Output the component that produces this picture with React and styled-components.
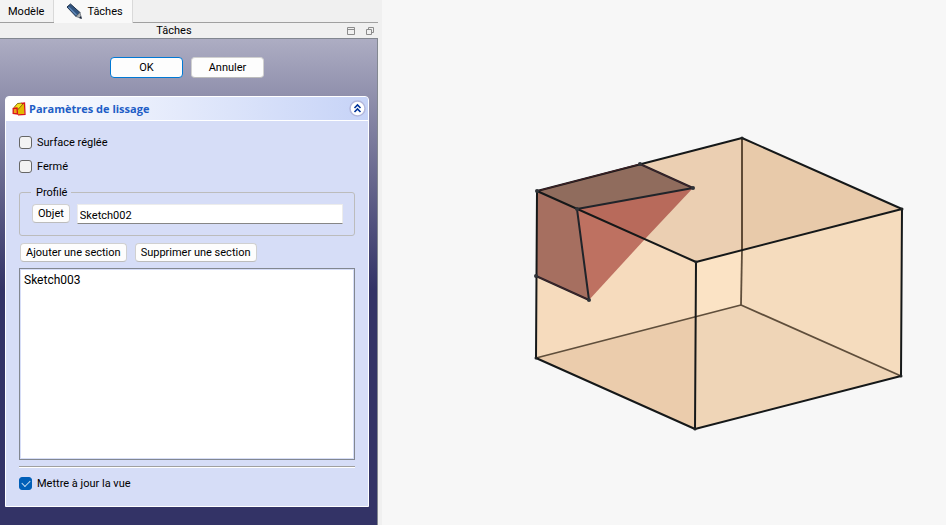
import { useState } from "react";
import styled, { createGlobalStyle } from "styled-components";

const GlobalStyle = createGlobalStyle`
  * {
    box-sizing: border-box;
  }

  body {
    margin: 0;
    background: #f7f7f7;
    color: #000;
    font-family: Roboto, "Open Sans", sans-serif;
    font-size: 11px;
    line-height: 16px;
  }

  button,
  input {
    color: inherit;
    font: inherit;
  }
`;

const Window = styled.div`
  display: grid;
  grid-template-columns: minmax(320px, 382fr) 564fr;
  min-height: 100vh;
`;

const Dock = styled.aside`
  display: flex;
  flex-direction: column;
  padding-right: 4px;
  background: #f0f0f0;
`;

const TabBar = styled.div`
  display: flex;
  height: 23px;
  box-shadow: inset 0 -1px #a0a0a0;
`;

const Tab = styled.button`
  display: flex;
  align-items: center;
  gap: 4px;
  height: ${(props) => (props.$active ? "23px" : "22px")};
  padding: ${(props) => (props.$active ? "0 9px 0 12px" : "2px 9px 0 8px")};
  border: 0;
  border-right: 1px solid #d9d9d9;
  background: ${(props) => (props.$active ? "#f9f9f9" : "#f3f3f3")};
`;

const DockTitle = styled.div`
  display: flex;
  align-items: center;
  height: 16px;
  padding: 0 4px 0 12px;
  border-bottom: 1px solid #828790;

  h1 {
    flex: 1;
    margin: 0;
    font-size: 11px;
    font-weight: 400;
    line-height: 16px;
    text-align: center;
  }
`;

const TitleButton = styled.button`
  display: flex;
  margin-left: 11px;
  padding: 0;
  border: 0;
  background: none;
`;

const TaskArea = styled.div`
  flex: 1;
  padding: 18px 8px 18px 5px;
  border-right: 1px solid #828790;
  background: linear-gradient(#adadc3, #8e8eab 60px, #333366 250px);
`;

const DialogButtons = styled.div`
  display: flex;
  justify-content: center;
  gap: 8px;
  margin-bottom: 18px;
`;

const Button = styled.button`
  padding: 0 5px;
  height: 19px;
  border: 1px solid #d0d0d0;
  border-bottom-color: #bcbcbc;
  border-radius: 4px;
  background: #fdfdfd;
  line-height: 16px;
  white-space: nowrap;
`;

const DialogButton = styled(Button)`
  width: 73px;
  height: 21px;
  padding: 1px 5px 0;
  ${(props) => props.$primary && "border-color: #0078d4;"}
`;

const Panel = styled.section`
  border: 1px solid #fff;
  border-radius: 4px 4px 0 0;
  background: #d6ddf7;
`;

const PanelHeader = styled.header`
  display: flex;
  align-items: center;
  gap: 3px;
  height: 24px;
  padding: 0 2px 0 6px;
  border-bottom: 1px solid #fff;
  border-radius: 3px 3px 0 0;
  background: linear-gradient(to right, #fff, #c6d3f7);

  h2 {
    flex: 1;
    margin: 0;
    color: #215dc6;
    font-family: "Open Sans", sans-serif;
    font-size: 11px;
    font-weight: 700;
  }
`;

const CollapseButton = styled.button`
  display: flex;
  padding: 0;
  border: 0;
  background: none;
`;

const PanelBody = styled.div`
  padding: 14px 13px;
`;

const CheckLabel = styled.label`
  display: flex;
  align-items: center;
  gap: 5px;
  width: fit-content;
  height: 16px;
`;

const Options = styled.div`
  display: grid;
  gap: 8px;
  margin-bottom: 9px;
`;

const CheckBox = styled.input.attrs({ type: "checkbox" })`
  display: grid;
  place-items: center;
  width: 13px;
  height: 13px;
  margin: 0 0 1px;
  appearance: none;
  border: 1px solid #666;
  border-radius: 3px;
  background: #f3f3f3;

  &:checked {
    border-color: #005fb8;
    background: #005fb8;
  }

  &:checked::after {
    content: "";
    width: 7px;
    height: 4px;
    border: solid #c5ddf3;
    border-width: 0 0 1px 1px;
    transform: translateY(-1px) rotate(-45deg);
  }
`;

const Profile = styled.fieldset`
  display: flex;
  gap: 7px;
  min-width: 0;
  margin: 0 0 7px;
  padding: 3px 11px 11px 12px;
  border: 1px solid #bcbcbc;
  border-radius: 3px;

  legend {
    margin-left: -1px;
    padding: 1px 4px 0 5px;
  }
`;

const ProfileInput = styled.input`
  flex: 1;
  min-width: 0;
  height: 20px;
  padding: 2px 2px 0;
  border: 1px solid #ececec;
  border-bottom-color: #868686;
  background: #fff;
`;

const SectionButtons = styled.div`
  display: flex;
  gap: 8px;
  margin: 0 1px 6px;
`;

const SectionList = styled.ul`
  height: 192px;
  margin: 0 0 6px;
  padding: 3px 4px;
  border: 1px solid #828790;
  box-shadow: inset 0 0 0 1px #d6ddf7;
  background: #fff;
  font-size: 12px;
  list-style: none;
`;

const Separator = styled.hr`
  margin: 0 0 8px;
  border: 0;
  border-top: 1px solid #a0a0a0;
  border-bottom: 1px solid #fff;
`;

const Viewport = styled.main`
  display: flex;
  min-width: 0;
  background: #f7f7f7;

  svg {
    width: 100%;
    height: auto;
    align-self: flex-start;
  }
`;

const PencilIcon = () => (
  <svg width="17" height="17" viewBox="0 0 17 17" aria-hidden="true">
    <path d="M1 4 4.5 1 14 9.5 10 13.5Z" fill="#31547f" stroke="#20334d" />
    <path d="M2.5 4 10.5 12" stroke="#5f89b8" strokeWidth="1.5" />
    <path d="M10 13.5 14 9.5 15.5 15.5Z" fill="#aeb3b5" stroke="#4e5661" strokeWidth=".6" />
    <path d="m13 15 2-2 .7 2.7Z" fill="#172238" />
  </svg>
);

const LoftIcon = () => (
  <svg width="14" height="14" viewBox="0 0 14 14" aria-hidden="true">
    <path d="M1.5 6 5.5 1.5 12 1l.5 11-7 .5Z" fill="#e2b900" />
    <path d="M2 5.500 5.500 1.500 12 1 7 6Z" fill="#f5df1c" />
    <path d="M2 5.5 5.5 1.5 10 1M5.5 8 11 2" fill="none" stroke="#6b560c" strokeWidth=".8" />
    <path d="M9.5 1.5 12.500 1l.5 11.500-7 .3" fill="none" stroke="#d9141b" strokeWidth="1.3" />
    <path d="M1.2 6.500 5 6l.5 6-4.3-.5Z" fill="#eda018" stroke="#d9141b" strokeWidth="1.3" />
  </svg>
);

const DockIcon = () => (
  <svg width="8" height="8" viewBox="0 0 8 8" fill="none" stroke="#8c8c8c" aria-hidden="true">
    <path d="M.5.5h7v7h-7ZM.5 2.5h7" />
  </svg>
);

const FloatIcon = () => (
  <svg width="8" height="8" viewBox="0 0 8 8" fill="none" stroke="#8c8c8c" aria-hidden="true">
    <path d="M.5 2.5h5v5h-5ZM2.5 2V.5h5v5H6" />
  </svg>
);

const CollapseIcon = () => (
  <svg width="17" height="17" viewBox="0 0 17 17" aria-hidden="true">
    <circle cx="8.5" cy="8.5" r="7.5" fill="#fff" stroke="#b3b8dc" strokeWidth="1.5" />
    <path
      d="m5.5 8 3-3 3 3M5.5 12l3-3 3 3"
      fill="none"
      stroke="#003399"
      strokeWidth="1.6"
    />
  </svg>
);

const faces = [
  // top
  ["742,138 742,250 696,262 537,191", "#ebcfb2"],
  ["742,138 902,209 742,250", "#e8caaa"],
  // sides
  ["537,191 696,262 695,317 536,358", "#f6dbbd"],
  ["696,262 742,250 741,305 695,317", "#fbe3c5"],
  ["742,250 902,209 901,376 741,305", "#f5dcbe"],
  // bottom
  ["536,358 695,317 695,429", "#ebccac"],
  ["695,317 741,305 901,376 695,429", "#efd5b7"],
  // loft
  ["537,191 640,164 693,188 577,209", "#906c5d"],
  ["537,191 577,209 589,300 536,276", "#a66f60"],
  ["577,209 693,188 645,239", "#b86a5b"],
  ["577,209 645,239 589,300", "#be7161"],
];

const vertices = [
  [537, 191],
  [640, 164],
  [693, 188],
  [577, 209],
  [589, 300],
  [536, 276],
];

const corners = [
  [742, 138],
  [902, 209],
  [696, 262],
  [536, 358],
  [695, 429],
  [901, 376],
];

const Model = () => (
  <svg viewBox="382 0 564 525" role="img" aria-label="Sketch003">
    {faces.map(([points, color]) => (
      <polygon key={points} points={points} fill={color} />
    ))}
    <g fill="none" strokeWidth="1.8" strokeLinejoin="round">
      <path d="M742 250 741 305" stroke="#5f4e3b" />
      <path d="M742 138 742 250" stroke="#503c29" />
      <path d="M536 358 741 305 901 376" stroke="#5f4e3b" />
      <path
        d="M537 191 742 138 902 209 901 376 695 429 536 358ZM537 191 696 262 902 209M696 262 695 429"
        stroke="#151819"
        strokeWidth="2"
      />
      <path d="M640 164 693 188 577 209 589 300 536 276" stroke="#20242a" strokeWidth="2" />
      <path d="M537 191 640 164 693 188M536 276 589 300" stroke="#442126" strokeWidth="1" />
    </g>
    {vertices.map(([x, y]) => (
      <circle key={`${x}-${y}`} cx={x} cy={y} r="2" fill="#303338" />
    ))}
    {corners.map(([x, y]) => (
      <circle key={`${x}-${y}`} cx={x} cy={y} r="1.5" fill="#202324" />
    ))}
  </svg>
);

function App() {
  const [tab, setTab] = useState("tasks");
  const [profile, setProfile] = useState("Sketch002");
  const [options, setOptions] = useState({
    ruled: false,
    closed: false,
    update: true,
  });

  const toggle = (name) => {
    setOptions({ ...options, [name]: !options[name] });
  };

  return (
    <Window>
      <GlobalStyle />
      <Dock>
        <TabBar role="tablist">
          <Tab
            role="tab"
            aria-selected={tab === "model"}
            $active={tab === "model"}
            onClick={() => setTab("model")}
          >
            Modèle
          </Tab>
          <Tab
            role="tab"
            aria-selected={tab === "tasks"}
            $active={tab === "tasks"}
            onClick={() => setTab("tasks")}
          >
            <PencilIcon />
            Tâches
          </Tab>
        </TabBar>
        <DockTitle>
          <h1>Tâches</h1>
          <TitleButton aria-label="Ancrer">
            <DockIcon />
          </TitleButton>
          <TitleButton aria-label="Détacher">
            <FloatIcon />
          </TitleButton>
        </DockTitle>
        <TaskArea>
          <DialogButtons>
            <DialogButton $primary>OK</DialogButton>
            <DialogButton>Annuler</DialogButton>
          </DialogButtons>
          <Panel>
            <PanelHeader>
              <LoftIcon />
              <h2>Paramètres de lissage</h2>
              <CollapseButton aria-label="Réduire">
                <CollapseIcon />
              </CollapseButton>
            </PanelHeader>
            <PanelBody>
              <Options>
                <CheckLabel>
                  <CheckBox checked={options.ruled} onChange={() => toggle("ruled")} />
                  Surface réglée
                </CheckLabel>
                <CheckLabel>
                  <CheckBox checked={options.closed} onChange={() => toggle("closed")} />
                  Fermé
                </CheckLabel>
              </Options>
              <Profile>
                <legend>Profilé</legend>
                <Button>Objet</Button>
                <ProfileInput
                  aria-label="Profilé"
                  value={profile}
                  onChange={(e) => setProfile(e.target.value)}
                />
              </Profile>
              <SectionButtons>
                <Button>Ajouter une section</Button>
                <Button>Supprimer une section</Button>
              </SectionButtons>
              <SectionList>
                <li>Sketch003</li>
              </SectionList>
              <Separator />
              <CheckLabel>
                <CheckBox checked={options.update} onChange={() => toggle("update")} />
                Mettre à jour la vue
              </CheckLabel>
            </PanelBody>
          </Panel>
        </TaskArea>
      </Dock>
      <Viewport>
        <Model />
      </Viewport>
    </Window>
  );
}

export default App;
